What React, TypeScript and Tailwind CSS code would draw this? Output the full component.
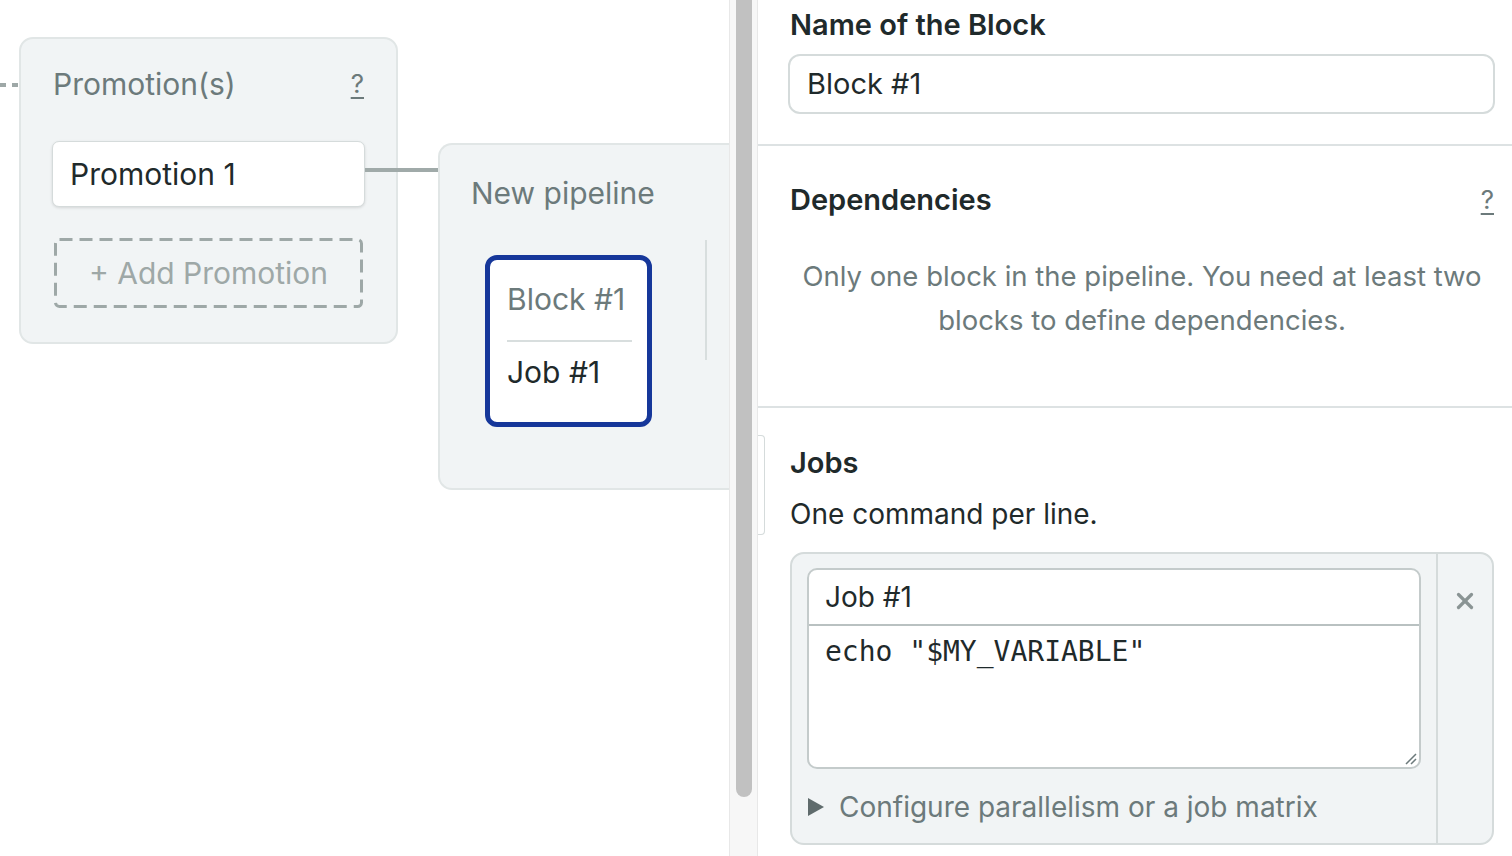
import { X } from "lucide-react";

const font = { fontFamily: "Inter, 'Noto Sans', sans-serif" };

function PromotionsCard() {
  return (
    <div className="w-[379px] h-[307px] shrink-0 rounded-[14px] border-2 border-[#e1e6e6] bg-[#f1f4f5] px-[31px] pt-[25px]">
      <div className="flex items-center justify-between pl-[1px] pr-[1px]">
        <span className="text-[30px] leading-[40px] text-[#6c7a7b]">Promotion(s)</span>
        <span className="text-[26px] leading-[40px] text-[#6c7a7b] underline underline-offset-4">?</span>
      </div>
      <div className="mt-[37px] flex h-[66px] items-center rounded-[7px] border border-[#d5dbdb] bg-white pl-[17px] shadow-[0_1px_3px_rgba(0,0,0,0.12)]">
        <span className="text-[30px] text-[#1f2a2b]">Promotion 1</span>
      </div>
      <div className="relative mx-[2px] mt-[31px] flex h-[70px] items-center justify-center">
        <svg className="absolute inset-0" width="309" height="70">
          <rect x="1.5" y="1.5" width="306" height="67" rx="4" fill="none" stroke="#9ea8a7" strokeWidth="3" strokeDasharray="13 7" />
        </svg>
        <span className="relative text-[30px] text-[#9ea8a7]">+ Add Promotion</span>
      </div>
    </div>
  );
}

function PipelineCard() {
  return (
    <div className="ml-[40px] mt-[106px] flex h-[347px] w-[320px] shrink-0 flex-col rounded-l-[14px] border-2 border-r-0 border-[#e1e6e6] bg-[#f1f4f5] pl-[31px] pt-[28px]">
      <span className="text-[30px] leading-[40px] text-[#6c7a7b]">New pipeline</span>
      <div className="flex items-start">
        <div className="ml-[14px] mt-[42px] flex h-[172px] w-[167px] flex-col rounded-[12px] border-[5px] border-[#16379a] bg-white px-[17px] pt-[21px]">
          <span className="text-[30px] leading-[36px] text-[#6c7a7b]">Block #1</span>
          <div className="mt-[23px] h-[2px] w-[125px] bg-[#d8dede]" />
          <span className="mt-[12px] text-[30px] leading-[36px] text-[#1f2a2b]">Job #1</span>
        </div>
        <div className="ml-[53px] mt-[27px] h-[120px] w-[2px] bg-[#d8dede]" />
      </div>
    </div>
  );
}

function Canvas() {
  return (
    <div className="relative w-[729px] shrink-0 overflow-hidden bg-white">
      <div className="absolute left-0 top-[83px] flex gap-[6px]">
        <div className="h-[4px] w-[6px] bg-[#9ea8a7]" />
        <div className="h-[4px] w-[6px] bg-[#9ea8a7]" />
      </div>
      <div className="absolute left-[365px] top-[168px] h-[4px] w-[73px] bg-[#a0aaa9]" />
      <div className="flex items-start pl-[19px] pt-[37px]">
        <PromotionsCard />
        <PipelineCard />
      </div>
    </div>
  );
}

function Scrollbar() {
  return (
    <div className="flex w-[29px] shrink-0 justify-center border-x border-[#e8e8e8] bg-[#f7f7f7]">
      <div className="h-[797px] w-[16px] rounded-b-full bg-[#c1c1c1]" />
    </div>
  );
}

function Panel() {
  return (
    <div className="relative flex-1 bg-white text-[#1f2a2b]">
      <div className="absolute left-0 top-[435px] h-[100px] w-[7px] rounded-r-[4px] border border-l-0 border-[#d5dbdb]" />
      <section className="border-b-2 border-[#dde2e3] pb-[30px] pl-[32px] pr-[17px] pt-[6px]">
        <h2 className="text-[29px] font-semibold leading-[38px]">Name of the Block</h2>
        <div className="-ml-[2px] mt-[10px] flex h-[60px] items-center rounded-[12px] border-2 border-[#d5dbdb] pl-[17px]">
          <span className="text-[29px]">Block #1</span>
        </div>
      </section>
      <section className="border-b-2 border-[#dde2e3] pb-[64px] pl-[32px] pr-[18px] pt-[35px]">
        <div className="flex items-center justify-between">
          <h2 className="text-[29px] font-semibold leading-[38px]">Dependencies</h2>
          <span className="text-[26px] leading-[38px] text-[#6c7a7b] underline underline-offset-4">?</span>
        </div>
        <p className="mt-[35px] text-center text-[27.5px] leading-[44px] text-[#6c7a7b]">
          Only one block in the pipeline. You need at least two
          <br />
          blocks to define dependencies.
        </p>
      </section>
      <section className="pl-[32px] pr-[18px] pt-[36px]">
        <h2 className="text-[29px] font-semibold leading-[38px]">Jobs</h2>
        <p className="mt-[13px] text-[28px] leading-[38px]">One command per line.</p>
        <div className="mt-[19px] flex h-[293px] rounded-[14px] border-2 border-[#d5dbdb] bg-[#f1f4f5]">
          <div className="flex flex-1 flex-col pl-[15px] pr-[15px] pt-[14px]">
            <div className="flex h-[201px] flex-col overflow-hidden rounded-[10px] border-2 border-[#c4cbcb] bg-white">
              <div className="flex h-[56px] items-center border-b-2 border-[#b9c1c1] pl-[16px]">
                <span className="text-[28px]">Job #1</span>
              </div>
              <div className="relative flex-1 pl-[16px] pt-[8px]">
                <span className="whitespace-pre text-[28px] leading-[36px]" style={{ fontFamily: "'DejaVu Sans Mono', monospace" }}>
                  echo "$MY_VARIABLE"
                </span>
                <svg className="absolute bottom-[2px] right-[2px]" width="14" height="14" viewBox="0 0 14 14">
                  <path d="M13 3 L3 13 M13 8 L8 13" stroke="#6c7a7b" strokeWidth="1.5" />
                </svg>
              </div>
            </div>
            <div className="mt-[20px] flex items-center gap-[14px] text-[#6c7a7b]">
              <svg width="18" height="20" viewBox="0 0 18 20">
                <path d="M1 1 L17 10 L1 19 Z" fill="#5f6b6c" />
              </svg>
              <span className="text-[28px] leading-[36px]">Configure parallelism or a job matrix</span>
            </div>
          </div>
          <div className="flex w-[56px] shrink-0 justify-center border-l-2 border-[#d5dbdb] pt-[34px]">
            <X size={26} strokeWidth={3} color="#8a9494" />
          </div>
        </div>
      </section>
    </div>
  );
}

export default function App() {
  return (
    <div className="flex h-[856px] w-[1512px] overflow-hidden bg-white" style={font}>
      <Canvas />
      <Scrollbar />
      <Panel />
    </div>
  );
}
